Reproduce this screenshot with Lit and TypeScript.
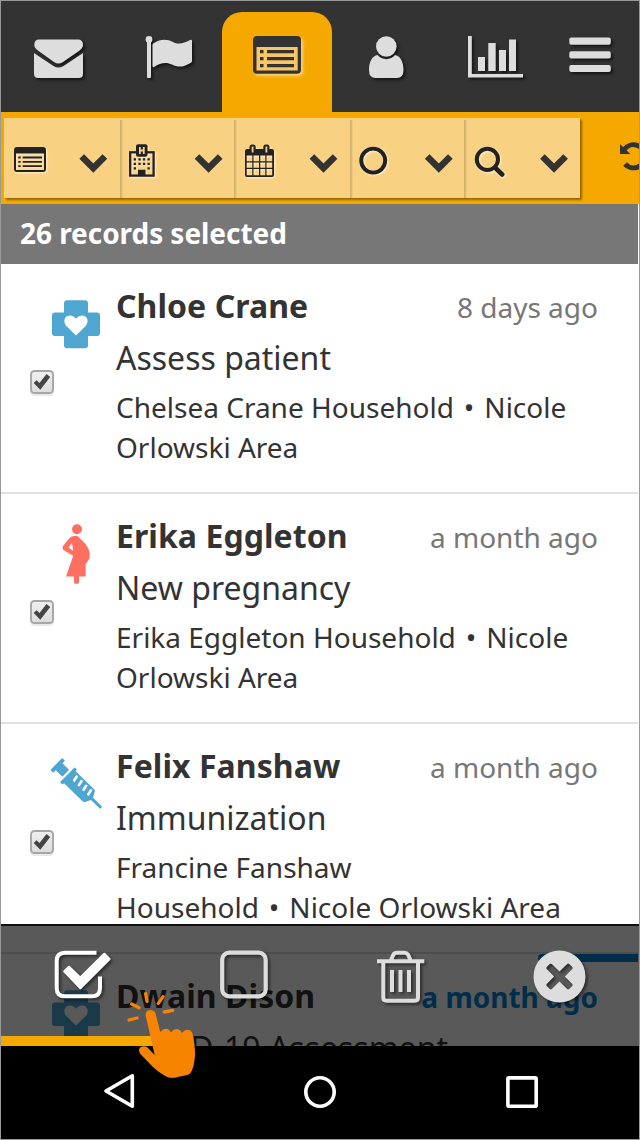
import { LitElement, html, css, svg, nothing } from "lit";
import { customElement, property } from "lit/decorators.js";
import { classMap } from "lit/directives/class-map.js";

const cross = svg`<g transform="translate(52 36.200)"><rect x="12" width="24" height="48" rx="3"/><rect y="12.300" width="48" height="23.400" rx="3"/><path fill="#fff" d="M24 35.300 L14 25.500 C8.500 17.500 18 11.500 24 18.500 C30 11.500 39.500 17.500 34 25.500Z"/></g>`;
const pregnant = svg`<circle cx="77" cy="35.200" r="5"/><path fill-rule="evenodd" d="M74 42 Q78 41 80.500 45 C85 49 90 54 89.800 62 C89.500 67 86 68 85.500 71 L85.700 82.500 H79 V88 q0 1.800-1.500 1.800 h-2 q-1.500 0-1.500-1.800 V82.500 H66 L72.500 64 L73 61.700 L63.500 56 Q61.500 54 63 52 L69 44.500 Q71 42 74 42Z M71.800 49 L68.500 53.500 L73 56.700 Q72.800 52 71.800 49Z"/>`;
const syringe = svg`<g transform="translate(57.300 41) rotate(44.300)"><rect x="-1.500" y="-8.500" width="4" height="17" rx="1.200"/><rect x="0" y="-4.800" width="11.800" height="9.600"/><path d="M14 -9.500 q0-1 1-1 h1.500 q1 0 1 1 v1.200 H43 q2.500 0 3.200 2.500 L48.500 -1.500 H60 q1.500 0 1.500 1.500 T60 1.500 H48.500 L46.200 5.800 q-.8 2.500-3.200 2.500 H17.500 V9.500 q0 1-1 1 h-1.500 q-1 0-1-1Z"/><path d="M22 -5.300l.9 4.600M28.600 -5.300l.9 4.600M35.200 -5.300l.9 4.600M41.800 -5.300l.9 4.600" stroke="#fff" stroke-width="2.600" stroke-linecap="round"/></g>`;

const chevron = (x: number) =>
  svg`<path d="M${x - 11.6} 156.500 L${x} 168 L${x + 11.6} 156.500" fill="none" stroke="#333" stroke-width="6.600" stroke-linejoin="miter"/>`;

const TABS = [
  { x: 1, w: 111, icon: svg`<path d="M34.300 45 q0-5.500 4.700-5.500 h39 q5 0 5 5.500 q0 3-4 6 L63 62 Q58.500 65 54 62 L38.500 51 Q34.300 48 34.300 45Z M34 53 L53.500 66 Q58.500 69 63.500 66 L83 53 V74 q0 4-4 4 H38 q-4 0-4-4Z"/>` },
  { x: 112, w: 110, icon: svg`<circle cx="149" cy="39.500" r="3.400"/><rect x="147" y="40" width="4" height="38" rx="1"/><path d="M152.500 45 q0-1 1-1.700 C161 38.500 167 38.800 173 42 S184 43 190 40 q2-1 2 1 V61 q0 1.300-1.500 2 C183 67.500 178 67.500 172 64.500 S160 63 154 67 q-1.500 .5-1.500-1Z"/>` },
  { x: 222, w: 110, active: true, icon: svg`<rect x="253" y="36" width="48" height="37.700" rx="4"/><path class="window" d="M256.500 47h41.200v23.500h-41.200z"/><path d="M260 50h3.500v3.200H260zM267 50h27v3.200h-27zM260 57h3.500v3.200H260zM267 57h27v3.200h-27zM260 64h3.500v3.200H260zM267 64h27v3.200h-27z"/>` },
  { x: 332, w: 110, icon: svg`<circle cx="386.300" cy="46.500" r="10.300"/><path d="M377.500 55 c4 5.500 13.500 5.500 17.500 0 c6 1 8.500 8 8.500 15 q0 8-6.500 8 H375.500 q-6.500 0-6.500-8 c0-8 3-14 8.500-15z"/>` },
  { x: 442, w: 110, icon: svg`<path d="M468 36h3.800v38H523v3.600h-55zM478 57h7v14h-7zM488.300 43h7.400v28h-7.400zM499 50h7v21h-7zM509 39.500h7v31.500h-7z"/>` },
  { x: 552, w: 87, icon: svg`<rect x="569.300" y="37.500" width="41.500" height="7.300" rx="2"/><rect x="569.300" y="51.200" width="41.500" height="7.300" rx="2"/><rect x="569.300" y="65" width="41.500" height="7" rx="2"/>` },
];

const FILTERS = [
  { x: 4, w: 116, c: 93.3, icon: svg`<path fill-rule="evenodd" d="M17 147h26q3 0 3 3v19q0 3-3 3H17q-3 0-3-3v-19q0-3 3-3zM16 153.400v16.600h28v-16.600z"/><path d="M18.300 156.500h2.400v1.900h-2.400zM22.700 156.500H42v1.900H22.700zM18.300 160.900h2.400v1.900h-2.400zM22.700 160.900H42v1.900H22.700zM18.300 165.200h2.400v1.900h-2.400zM22.700 165.200H42v1.900H22.700z"/>` },
  { x: 120, w: 114, c: 208.6, icon: svg`<rect x="130.200" y="152.300" width="23.400" height="23.300" fill="none" stroke="#222" stroke-width="2.300"/><rect x="136" y="144.200" width="11.500" height="12.600" rx="2"/><path stroke="#f9d182" stroke-width="1.800" d="M139.900 147v7M143.800 147v7M139.900 150.500h4"/><path d="M133.700 158.300h2.300v2.300h-2.300zm4.700 0h2.300v2.300h-2.300zm4.500 0h2.300v2.300h-2.300zm4.600 0h2.300v2.300h-2.300zM133.700 162.700h2.300v2.300h-2.300zm4.700 0h2.300v2.300h-2.300zm4.500 0h2.300v2.300h-2.300zm4.600 0h2.300v2.300h-2.300zM133.700 167.300h2.300v2.300h-2.300zm13.800 0h2.300v2.300h-2.300zM138 169.800h7.500v6H138z"/>` },
  { x: 234, w: 116, c: 323.5, icon: svg`<path fill-rule="evenodd" d="M247 149h25q2 0 2 2v24q0 2-2 2h-25q-2 0-2-2v-24q0-2 2-2zM246.700 155.500v5.800h5.600v-5.800zM253.500 155.500v5.800h5.500v-5.800zM260.300 155.500v5.800h5v-5.800zM266.500 155.500v5.800h5.700v-5.800zM246.700 162.500v5.300h5.600v-5.300zM253.500 162.500v5.300h5.500v-5.300zM260.300 162.500v5.300h5v-5.300zM266.500 162.500v5.300h5.700v-5.300zM246.700 169v6.200h5.600V169zM253.500 169v6.200h5.500V169zM260.300 169v6.200h5V169zM266.500 169v6.200h5.700V169z"/><rect x="249.500" y="144.500" width="6.200" height="9.500" rx="2.500"/><rect x="263.300" y="144.500" width="6.200" height="9.500" rx="2.500"/><path stroke="#f9d182" stroke-width="1.800" d="M252.600 146.500v6M266.400 146.500v6"/>` },
  { x: 350, w: 114, c: 438.8, icon: svg`<circle cx="373.200" cy="160.600" r="12" fill="none" stroke="#222" stroke-width="3.900"/>` },
  { x: 464, w: 116, c: 554, icon: svg`<circle cx="487.400" cy="159.300" r="10.600" fill="none" stroke="#222" stroke-width="4"/><path stroke="#222" stroke-width="4.600" stroke-linecap="round" d="M495.500 168l6.700 6.500"/>` },
];

const RECORDS = [
  { name: "Chloe Crane", task: "Assess patient", date: "8 days ago", lines: [["Chelsea Crane Household", "Nicole"], ["Orlowski Area"]], icon: cross, color: "blue" },
  { name: "Erika Eggleton", task: "New pregnancy", date: "a month ago", lines: [["Erika Eggleton Household", "Nicole"], ["Orlowski Area"]], icon: pregnant, color: "coral" },
  { name: "Felix Fanshaw", task: "Immunization", date: "a month ago", lines: [["Francine Fanshaw"], ["Household", "Nicole Orlowski Area"]], icon: syringe, color: "blue" },
  { name: "Dwain Dison", task: "COVID-19 Assessment", date: "a month ago", lines: [], icon: cross, color: "blue", overdue: true },
];

@customElement("record-row")
export class RecordRow extends LitElement {
  @property({ attribute: false }) record: any;

  static styles = css`
    :host { display: block; flex: none; box-sizing: border-box; height: 230px; border-bottom: 2px solid #e0e0e0; background: #fff; }
    .row { position: relative; display: flex; height: 228px; color: #333; font-family: "Noto Sans", sans-serif; }
    .side { flex: none; width: 115px; height: 228px; }
    .blue { fill: #4fa6d1; }
    .coral { fill: #ff6f5f; }
    .body { flex: 1; padding: 16px 40px 0 0; min-width: 0; }
    .head { display: flex; justify-content: space-between; align-items: baseline; height: 52px; line-height: 52px; }
    .name { font-size: 32px; font-weight: 700; letter-spacing: .06px; }
    .date { font-size: 28px; color: #777; }
    .task { font-size: 32px; line-height: 52px; height: 55px; }
    .line { font-size: 28px; line-height: 40px; white-space: nowrap; }
    .dot { margin: 0 2.700px; }
    .overdue .date { color: #0085d4; font-weight: 700; }
    .ribbon { position: absolute; right: 0; top: 0; width: 100px; height: 8px; border-radius: 4px 0 0 4px; background: #0085d4; }
  `;

  render() {
    const r = this.record;
    return html`<div class=${classMap({ row: true, overdue: !!r.overdue })}>
      ${r.overdue ? html`<div class="ribbon"></div>` : nothing}
      <svg class="side" viewBox="1 0 115 228">
        <defs><linearGradient id="g" x2="0" y2="1"><stop stop-color="#f0f0f0"/><stop offset="1" stop-color="#dcdcdc"/></linearGradient></defs>
        <g class=${r.color}>${r.icon}</g>
        <rect x="31" y="108" width="22" height="23" rx="3.500" fill="none" stroke="#e9e9e9" stroke-width="2"/>
        <rect x="31" y="107" width="22" height="22" rx="3.500" fill="url(#g)" stroke="#a6a6a6" stroke-width="1.900"/>
        <path fill="#444" d="M33.700 119 L36.500 116.300 L39.500 119 L46.500 110 L50.200 113 L40.300 125.700Z"/>
      </svg>
      <div class="body">
        <div class="head"><span class="name">${r.name}</span><span class="date">${r.date}</span></div>
        <div class="task">${r.task}</div>
        ${r.lines.map((l: string[]) => html`<div class="line">${l[0]}${l[1] ? html` <span class="dot">•</span> ${l[1]}` : nothing}</div>`)}
      </div>
    </div>`;
  }
}

@customElement("app-root")
export class AppRoot extends LitElement {
  static styles = css`
    :host { display: block; width: 640px; height: 1140px; font-family: "Noto Sans", sans-serif; }
    svg { display: block; }
    .frame { position: relative; box-sizing: border-box; width: 640px; height: 1140px; border: 1px solid #999; display: flex; flex-direction: column; overflow: hidden; background: #fff; }
    .tabs { flex: none; display: flex; align-items: flex-end; height: 111px; background: #333; }
    .tab { flex: none; height: 100px; }
    .tab svg { fill: #ddd; filter: drop-shadow(2px 2px 1.5px rgba(0, 0, 0, .6)); }
    .tab.active { background: #f5a900; border-radius: 20px 20px 0 0; }
    .tab.active svg { fill: #333; filter: drop-shadow(2px 2px 1.5px rgba(255, 255, 255, .5)); }
    .window { fill: #fac564; }
    .filters { flex: none; display: flex; box-sizing: border-box; height: 92px; padding: 6px 0 6px 3px; background: #f5a900; overflow: hidden; }
    .group { flex: none; display: flex; height: 80px; background: #f9d182; box-shadow: 2px 2px 2px rgba(0, 0, 0, .4); }
    .filter + .filter { background: linear-gradient(90deg, rgba(0, 0, 0, .17), rgba(0, 0, 0, .1) 60%, transparent) 0 2px / 3px 78px no-repeat; }
    .glow { fill: #222; filter: drop-shadow(1.500px 1.500px 1px rgba(255, 255, 255, .7)); }
    .count { flex: none; height: 60px; box-sizing: border-box; margin-right: 1px; padding-left: 19px; background: #777; color: #fff; font-size: 28px; font-weight: 700; letter-spacing: -.05px; line-height: 58px; }
    .list { flex: 1; min-height: 0; overflow: hidden; display: flex; flex-direction: column; margin-right: 1px; }
    .nav { flex: none; height: 93px; background: #000; }
    .nav svg, .actions svg { fill: none; }
    .actions { position: absolute; left: 0; right: 0; bottom: 93px; height: 122px; box-sizing: border-box; border-top: 2px solid #111; background: rgba(0, 0, 0, .65); background-clip: padding-box; }
    .buttons { display: flex; height: 110px; }
    .raised { filter: drop-shadow(2px 2px 1.500px rgba(0, 0, 0, .5)); }
    .progress { width: 160px; height: 10px; background: #f5a900; }
    .pointer { position: absolute; left: 125px; top: 989px; }
  `;

  render() {
    return html`<div class="frame">
      <div class="tabs">
        ${TABS.map((t) => html`<div class=${classMap({ tab: true, active: !!t.active })}>
          <svg width=${t.w} height="100" viewBox="${t.x} 12 ${t.w} 100">${t.icon}</svg>
        </div>`)}
      </div>
      <div class="filters">
        <div class="group">
          ${FILTERS.map((f) => html`<div class="filter">
            <svg width=${f.w} height="80" viewBox="${f.x} 118 ${f.w} 80"><g class="glow">${f.icon}</g>${chevron(f.c)}</svg>
          </div>`)}
        </div>
        <svg width="59" height="80" viewBox="580 118 59 80"><path fill="#333" d="M620 144v10h10.300z"/><path fill="none" stroke="#333" stroke-width="5" d="M624.300 149.500 A11.300 11.300 0 0 1 644.800 156.500 A11.300 11.300 0 0 1 625 164"/></svg>
      </div>
      <div class="count">26 records selected</div>
      <div class="list">
        ${RECORDS.map((r) => html`<record-row .record=${r}></record-row>`)}
      </div>
      <div class="actions">
        <div class="buttons">
          <svg width="159" height="110" viewBox="1 926 159 110"><g class="raised">
            <path d="M96.500 952.700 H65 Q56.700 952.700 56.700 961 V988 Q56.700 996.300 65 996.300 H92 Q100 996.300 100 988 V976.500" stroke="#fff" stroke-width="4" stroke-linecap="butt"/>
            <path d="M64.500 971.300 L69 967 L80.300 978 L104.500 954 L109.300 959 L80.300 988Z" fill="#fff" stroke="#fff" stroke-width="2.500" stroke-linejoin="round"/></g></svg>
          <svg width="160" height="110" viewBox="160 926 160 110"><rect class="raised" x="222.200" y="952.700" width="43.500" height="43.600" rx="7" stroke="#ddd" stroke-width="4.200"/></svg>
          <svg width="160" height="110" viewBox="320 926 160 110"><g class="raised" stroke="#ddd" stroke-width="4">
            <path d="M377 961.200H424.300M391 960 L393.500 954.500 Q394.500 952.700 397 952.700 H404.500 Q406.800 952.700 408 954.500 L410.500 960M383.300 962V997.500Q383.300 1000.700 386.500 1000.700H414.800Q418 1000.700 418 997.500V962M392 970V992M400.500 970V992M409 970V992"/></g></svg>
          <svg width="159" height="110" viewBox="480 926 159 110"><path class="raised" fill="#ddd" fill-rule="evenodd" d="M559.500 950.500a26 26 0 1 0 0 52a26 26 0 1 0 0-52z M551.800 963.900 q-1.200-.5-2 0 l-2.600 2.600-.5.500q-.8 1 0 2l7.500 7.500-7.500 7.500q-.8 1 0 2l3.100 3.100q1 .8 2 0l7.700-7.700 7.700 7.700q1 .8 2 0l3.100-3.100q.8-1 0-2l-7.500-7.500 7.500-7.500q.8-1 0-2l-3.100-3.100q-1-.8-2 0l-7.700 7.700z"/></svg>
        </div>
        <div class="progress"></div>
      </div>
      <div class="nav">
        <svg width="638" height="93" viewBox="1 1046 638 93" stroke="#fff" stroke-width="3.600" stroke-linejoin="round">
          <path d="M106 1091 L132.300 1075.800 V1106.300Z"/>
          <circle cx="320" cy="1092" r="14.200"/>
          <rect x="507.900" y="1077.900" width="28.300" height="28.300" rx="1"/>
        </svg>
      </div>
      <svg class="pointer" width="75" height="90" viewBox="378 225 225 270">
        <path fill="#f78400" d="M437 302 Q436 287 450 285 Q464 285 467 297 L481 352 Q490 338 503 342 Q511 346 513 352 Q522 340 533 342 Q543 345 546 354 Q556 341 568 345 Q577 349 579 362 Q586 395 585 420 Q583 455 573 472 Q569 478 562 480 L530 487 Q515 491 500 485 Q470 470 448 445 L421 417 Q413 405 421 397 Q430 391 441 396 L464 420Z"/>
        <path fill="none" stroke="#f78400" stroke-width="10" stroke-linecap="round" d="M437 236L441 259M489 245L475 265M395 267L417 278M493 291L518 286M387 315L411 309"/>
      </svg>
    </div>`;
  }
}
